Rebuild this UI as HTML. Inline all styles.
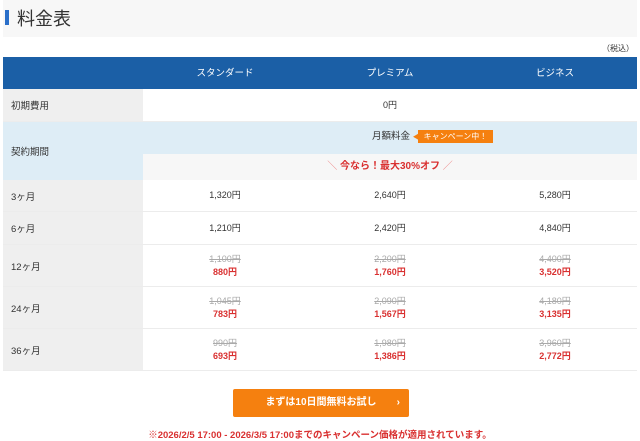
<!DOCTYPE html>
<html><head><meta charset="utf-8"><style>
*{margin:0;padding:0;box-sizing:border-box}
body{width:640px;height:440px;background:#fff;font-family:"Liberation Sans","Noto Sans CJK JP",sans-serif;color:#333;position:relative;overflow:hidden}
.tb{position:absolute;left:3px;top:0;width:634px;height:37px;background:#f7f7f7}
.tb i{position:absolute;left:2px;top:10px;width:4px;height:15px;background:#2a6fc9}
.tb span{position:absolute;left:14px;top:5px;font-size:18px;color:#333}
.tax{position:absolute;right:6px;top:43px;font-size:8px;color:#333}
.r{position:absolute;left:3px;width:634px;border-bottom:1px solid #ececec}
.l{position:absolute;left:0;top:0;bottom:0;width:140px;background:#efefef;font-size:9.5px;padding-left:8px;display:flex;align-items:center}
.c{position:absolute;top:0;bottom:0;width:164px;display:flex;flex-direction:column;align-items:center;justify-content:center;font-size:9px;line-height:13px}
.c1{left:140px}.c2{left:305px}.c3{left:470px}
.hd{top:57px;height:32px;background:#1b5fa6;border:none}
.hd .c{color:#fff;font-size:9.5px}
s{color:#aaa}
b{color:#d93030}
.btn{position:absolute;left:233px;top:389px;width:176px;height:28px;background:#f5800f;border-radius:2px;color:#fff;font-size:10px;font-weight:bold;text-align:center;line-height:28px}
.btn em{position:absolute;right:9px;font-style:normal}
.note{position:absolute;top:427px;left:0;width:640px;text-align:center;color:#d93030;font-size:9.5px;font-weight:bold}
</style></head><body>
<div class="tb"><i></i><span>料金表</span></div>
<div class="tax">（税込）</div>
<div class="r hd"><div class="c c1">スタンダード</div><div class="c c2">プレミアム</div><div class="c c3">ビジネス</div></div>
<div class="r" style="top:89px;height:33px"><div class="l">初期費用</div><div class="c c2">0円</div></div>
<div class="r" style="top:122px;height:58px;border:none"><div class="l" style="background:#deedf6">契約期間</div>
<div style="position:absolute;left:140px;right:0;top:0;height:32px;background:#deedf6;font-size:9.5px;line-height:30px"><span style="position:absolute;left:229px">月額料金 <span style="color:#f5800f;font-size:7px">◀</span><span style="background:#f5800f;color:#fff;font-size:8px;padding:2px 6px;margin-left:-2px">キャンペーン中！</span></span></div>
<div style="position:absolute;left:140px;right:0;top:32px;height:26px;background:#f7f7f7;font-size:10px;text-align:center;line-height:26px;color:#d93030;font-weight:bold"><span style="color:#e88;font-weight:normal">＼</span> 今なら！最大30%オフ <span style="color:#e88;font-weight:normal">／</span></div></div>
<div class="r" style="top:180px;height:32px"><div class="l">3ヶ月</div><div class="c c1">1,320円</div><div class="c c2">2,640円</div><div class="c c3">5,280円</div></div>
<div class="r" style="top:212px;height:33px"><div class="l">6ヶ月</div><div class="c c1">1,210円</div><div class="c c2">2,420円</div><div class="c c3">4,840円</div></div>
<div class="r" style="top:245px;height:42px"><div class="l">12ヶ月</div><div class="c c1"><s>1,100円</s><b>880円</b></div><div class="c c2"><s>2,200円</s><b>1,760円</b></div><div class="c c3"><s>4,400円</s><b>3,520円</b></div></div>
<div class="r" style="top:287px;height:42px"><div class="l">24ヶ月</div><div class="c c1"><s>1,045円</s><b>783円</b></div><div class="c c2"><s>2,090円</s><b>1,567円</b></div><div class="c c3"><s>4,180円</s><b>3,135円</b></div></div>
<div class="r" style="top:329px;height:42px"><div class="l">36ヶ月</div><div class="c c1"><s>990円</s><b>693円</b></div><div class="c c2"><s>1,980円</s><b>1,386円</b></div><div class="c c3"><s>3,960円</s><b>2,772円</b></div></div>
<div class="btn">まずは10日間無料お試し<em>›</em></div>
<div class="note">※2026/2/5 17:00 - 2026/3/5 17:00までのキャンペーン価格が適用されています。</div>
</body></html>
